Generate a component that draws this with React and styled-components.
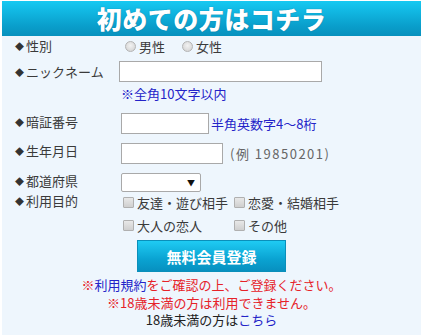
import React from 'react';
import styled, { createGlobalStyle } from 'styled-components';

const GlobalStyle = createGlobalStyle`
    html, body {
        margin: 0;
        padding: 0;
        background: #fff;
    }
    body {
        font-family: "Noto Sans CJK JP", "Noto Sans", sans-serif;
        font-size: 13px;
        color: #3a3a3a;
    }
`

const purposes = ["友達・遊び相手", "恋愛・結婚相手", "大人の恋人", "その他"];

class App extends React.Component {
    render() {
        return (
            <>
                <GlobalStyle />
                <Page>
                    <Panel>
                        <Header>初めての方はコチラ</Header>
                        <Form>
                            <Row $top={1}>
                                <Label $pad={1}><Mark>◆</Mark>性別</Label>
                                <Field>
                                    <RadioLabel><Radio type="radio" name="sex" />男性</RadioLabel>
                                    <RadioLabel><Radio type="radio" name="sex" />女性</RadioLabel>
                                </Field>
                            </Row>
                            <Row $top={5}>
                                <Label $pad={3}><Mark>◆</Mark>ニックネーム</Label>
                                <Field>
                                    <TextInput $width={203} $offset={0} />
                                </Field>
                            </Row>
                            <Row $top={4}>
                                <Label />
                                <Note>※全角10文字以内</Note>
                            </Row>
                            <Row $top={11}>
                                <Label $pad={1}><Mark>◆</Mark>暗証番号</Label>
                                <Field>
                                    <TextInput $width={88} $offset={2} />
                                    <Note>半角英数字4～8桁</Note>
                                </Field>
                            </Row>
                            <Row $top={9}>
                                <Label $pad={0}><Mark>◆</Mark>生年月日</Label>
                                <Field>
                                    <TextInput $width={102} $offset={2} />
                                    <Example>(例 19850201)</Example>
                                </Field>
                            </Row>
                            <Row $top={9}>
                                <Label $pad={0}><Mark>◆</Mark>都道府県</Label>
                                <Field>
                                    <Select>
                                        <Arrow>▼</Arrow>
                                    </Select>
                                </Field>
                            </Row>
                            <Row $top={1}>
                                <Label $pad={0}><Mark>◆</Mark>利用目的</Label>
                                <Checks>
                                    {purposes.map((p) => (
                                        <CheckLabel key={p}><Check type="checkbox" />{p}</CheckLabel>
                                    ))}
                                </Checks>
                            </Row>
                        </Form>
                        <ButtonWrap>
                            <Button>無料会員登録</Button>
                        </ButtonWrap>
                        <Notice>
                            <Red>※<Blue>利用規約</Blue>をご確認の上、ご登録ください。</Red>
                            <Red>※18歳未満の方は利用できません。</Red>
                            <Plain>18歳未満の方は<Blue>こちら</Blue></Plain>
                        </Notice>
                    </Panel>
                </Page>
            </>
        )
    }
}

const Page = styled.div`
    padding: 1px 2px 0 2px;
`
const Panel = styled.div`
    background: #eef6fd;
    min-height: 334px;
`
const Header = styled.h1`
    margin: 0;
    height: 35px;
    line-height: 35px;
    text-align: center;
    font-size: 25px;
    font-weight: 900;
    color: #fff;
    letter-spacing: 0.5px;
    background: linear-gradient(#16c9f2, #0a9fcc 70%, #0791bd);
    text-shadow: 0 0 1px rgba(0, 60, 90, 0.5);
`
const Form = styled.div`
    padding-left: 12px;
`
const Row = styled.div`
    display: grid;
    grid-template-columns: 105px 1fr;
    align-items: start;
    margin-top: ${(p) => p.$top}px;
`
const Label = styled.div`
    line-height: 16px;
    padding-top: ${(p) => p.$pad || 0}px;
    white-space: nowrap;
`
const Mark = styled.span`
    display: inline-block;
    font-size: 9px;
    margin: 0 2px 0 1px;
    vertical-align: 1px;
    color: #333;
`
const Field = styled.div`
    display: flex;
    align-items: center;
    min-height: 18px;
`
const RadioLabel = styled.label`
    display: flex;
    align-items: center;
    margin-right: 11px;
`
const Radio = styled.input`
    appearance: none;
    width: 11px;
    height: 11px;
    margin: 0 3px 0 6px;
    border-radius: 50%;
    border: 1px solid #b4b4b4;
    background: radial-gradient(circle at 50% 40%, #f2f2f2, #cfcfcf);
`
const TextInput = styled.input`
    box-sizing: border-box;
    width: ${(p) => p.$width}px;
    height: 21px;
    margin: 0 0 0 ${(p) => p.$offset}px;
    padding: 0 3px;
    border: 1px solid #a9a9a9;
    background: #fff;
`
const Note = styled.span`
    color: #2323c8;
    line-height: 16px;
    padding-left: 2px;
`
const Example = styled.span`
    color: #666;
    margin-left: 7px;
    letter-spacing: 1.5px;
`
const Select = styled.div`
    box-sizing: border-box;
    width: 80px;
    height: 19px;
    margin-left: 2px;
    border: 1px solid #a9a9a9;
    border-radius: 2px;
    background: #fff;
    display: flex;
    align-items: center;
    justify-content: flex-end;
    padding-right: 5px;
`
const Arrow = styled.span`
    font-size: 8px;
    color: #111;
`
const Checks = styled.div`
    display: grid;
    grid-template-columns: 111px auto;
    row-gap: 6px;
    padding-top: 1px;
    padding-left: 4px;
`
const CheckLabel = styled.label`
    display: flex;
    align-items: center;
    line-height: 17px;
    white-space: nowrap;
`
const Check = styled.input`
    appearance: none;
    width: 11px;
    height: 11px;
    margin: 0 3px 0 0;
    border: 1px solid #b0b0b0;
    border-radius: 1px;
    background: linear-gradient(#e8e8e8, #cfcfcf);
`
const ButtonWrap = styled.div`
    display: flex;
    justify-content: center;
    margin-top: 6px;
`
const Button = styled.button`
    width: 149px;
    height: 32px;
    border: 1px solid #0a8fba;
    background: linear-gradient(#1fcbf3, #0aa3d2 60%, #0790c0);
    color: #fff;
    font-family: "Noto Sans CJK JP", sans-serif;
    font-size: 15px;
    font-weight: 700;
    cursor: pointer;
`
const Notice = styled.div`
    margin-top: 4px;
    text-align: center;
    line-height: 17.5px;
`
const Red = styled.div`
    color: #e62229;
`
const Plain = styled.div`
    color: #222;
`
const Blue = styled.span`
    color: #2323c8;
`

export default App;
